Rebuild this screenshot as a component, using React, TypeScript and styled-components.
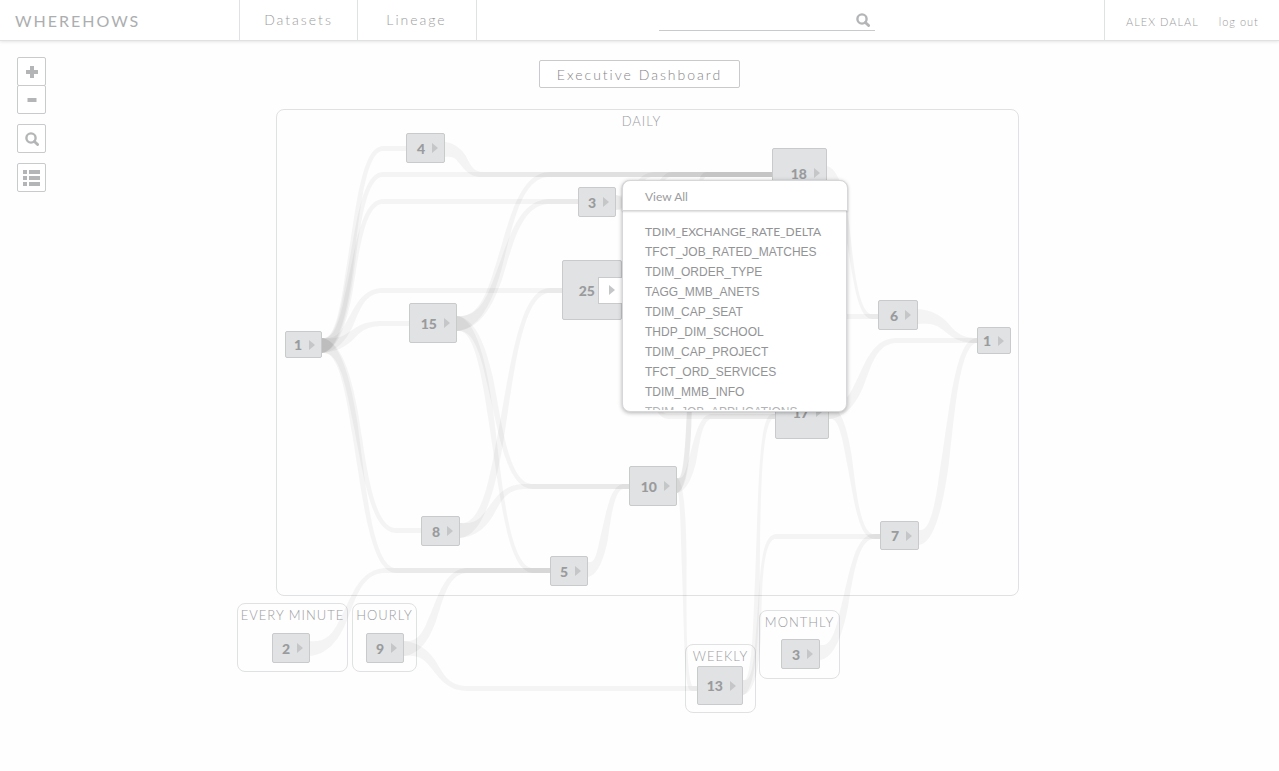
import React from "react";
import styled, { createGlobalStyle, css } from "styled-components";

const GlobalStyle = createGlobalStyle`
  *, *::before, *::after { box-sizing: border-box; }
  body { margin: 0; background: #fefefe; color: #9b9c9e; font-family: Lato, "Open Sans", sans-serif; }
  button, input { font: inherit; color: inherit; letter-spacing: inherit; }
  a { color: inherit; text-decoration: none; }
`;

const LINE = "#e0e1e2";
const EDGE = "#c9cacc";

const Header = styled.header`
  display: flex;
  height: 41px;
  background: #fff;
  border-bottom: 1px solid ${LINE};
  box-shadow: 0 1px 3px rgba(0, 0, 0, 0.1);
`;

const Brand = styled.a`
  flex: 0 0 239px;
  padding-left: 15px;
  line-height: 42px;
  font-size: 16px;
  letter-spacing: 2px;
  color: #acaeb0;
`;

const Nav = styled.nav`
  display: flex;
  padding-right: 1px;
  border-right: 1px solid ${LINE};
`;

const NavLink = styled.a`
  width: 118px;
  border-left: 1px solid ${LINE};
  text-align: center;
  line-height: 40px;
  font-size: 14px;
  font-weight: 300;
  letter-spacing: 2px;
`;

const SearchArea = styled.form`
  flex: 1;
  display: flex;
  justify-content: center;
  align-items: flex-start;
  padding: 10px 48px 0 0;
`;

const SearchBox = styled.label`
  display: flex;
  align-items: center;
  width: 216px;
  height: 21px;
  padding-right: 5px;
  border-bottom: 1px solid ${EDGE};
  color: #b4b5b7;
`;

const SearchInput = styled.input`
  flex: 1;
  min-width: 0;
  border: 0;
  padding: 0;
  background: none;
  outline: none;
  font-size: 14px;
`;

const Account = styled.div`
  flex: 0 0 175px;
  display: flex;
  gap: 20px;
  padding-left: 21px;
  border-left: 1px solid ${LINE};
  line-height: 43px;
  font-size: 11px;
  font-weight: 300;
  letter-spacing: 1px;
  white-space: nowrap;
`;

const Main = styled.main`
  position: relative;
  padding: 19px 0 56px;
`;

const Toolbar = styled.div`
  position: absolute;
  left: 17px;
  top: 16px;
  display: flex;
  flex-direction: column;
  gap: 10px;
`;

const ToolGroup = styled.div`
  display: flex;
  flex-direction: column;
`;

const ToolButton = styled.button`
  display: flex;
  align-items: center;
  justify-content: center;
  width: 29px;
  height: 29px;
  padding: 0;
  background: #fff;
  border: 1px solid ${EDGE};
  border-radius: 2px;
  color: #b4b5b7;
  ${ToolGroup} & + & { margin-top: -1px; }
`;

const Title = styled.button`
  display: block;
  width: 201px;
  height: 28px;
  margin: 0 auto 21px;
  padding: 0;
  background: #fff;
  border: 1px solid ${EDGE};
  border-radius: 2px;
  font-size: 14px;
  font-weight: 300;
  letter-spacing: 2px;
  color: #848587;
  white-space: nowrap;
`;

const ORIGIN_X = 237;
const ORIGIN_Y = 109;

const Graph = styled.section`
  position: relative;
  width: 805px;
  height: 605px;
  margin: 0 auto;
`;

type Box = { $x: number; $y: number; $w: number; $h: number };

const placed = css<Box>`
  position: absolute;
  left: ${(p) => p.$x - ORIGIN_X}px;
  top: ${(p) => p.$y - ORIGIN_Y}px;
  width: ${(p) => p.$w}px;
  height: ${(p) => p.$h}px;
`;

const Group = styled.div<Box>`
  ${placed}
  border: 1px solid ${LINE};
  border-radius: 8px;
  padding: 2px ${(p) => (p.$w > 200 ? 12 : 0)}px 0 0;
  text-align: center;
  font-size: 13px;
  line-height: 18px;
  font-weight: 300;
  letter-spacing: 1px;
  white-space: nowrap;
`;

const Links = styled.svg`
  position: absolute;
  left: 0;
  top: 0;
  width: 805px;
  height: 605px;
  pointer-events: none;
`;

const Node = styled.button<Box>`
  ${placed}
  display: flex;
  align-items: center;
  justify-content: flex-end;
  gap: 7px;
  padding: 0 6px 0 0;
  background: #e0e2e4;
  border: 1px solid ${EDGE};
  border-radius: 2px;
  font-size: 14px;
  font-weight: 900;
  color: #9a9b9d;
`;

const Arrow = styled.span`
  border-left: 6px solid #c4c6c8;
  border-top: 5px solid transparent;
  border-bottom: 5px solid transparent;
`;

const OpenTab = styled.span`
  display: flex;
  align-items: center;
  width: 24px;
  height: 27px;
  margin: 0 -7px 0 -4px;
  padding-left: 10px;
  background: #fff;
  border: 1px solid ${EDGE};
  border-right: 0;
`;

const Menu = styled.div<Box>`
  ${placed}
  display: flex;
  flex-direction: column;
  background: #fff;
  border: 1px solid #d6d7d8;
  border-radius: 8px;
  box-shadow: 0 1px 4px rgba(0, 0, 0, 0.3);
  font-size: 12px;
`;

const ViewAll = styled.a`
  flex: none;
  height: 31px;
  margin: -1px -2px 0 -1px;
  padding-left: 22px;
  line-height: 32px;
  background: #fff;
  border: 1px solid #d6d7d8;
  border-radius: 8px 8px 0 0;
  box-shadow: 0 1px 2px rgba(0, 0, 0, 0.14);
`;

const MenuList = styled.ul`
  flex: 1;
  min-height: 0;
  margin: 11px 0 1px;
  padding: 0 0 0 22px;
  list-style: none;
  overflow: hidden;
  line-height: 20px;
  font-family: "Liberation Sans", Arial, sans-serif;
  white-space: nowrap;
  color: #929395;
  li:first-child { font-family: Lato, sans-serif; }
  li:last-child { opacity: 0.7; }
`;

const SearchIcon = () => (
  <svg width="14" height="14" viewBox="0 0 14 14" fill="none" stroke="currentColor" aria-hidden="true">
    <circle cx="6" cy="6" r="4.6" strokeWidth="2.4" />
    <path d="M9.4 9.4 L12.6 12.6" strokeWidth="2.8" strokeLinecap="round" />
  </svg>
);

const groups: [string, number, number, number, number][] = [
  ["DAILY", 276, 109, 743, 487],
  ["EVERY MINUTE", 237, 603, 111, 69],
  ["HOURLY", 352, 603, 65, 69],
  ["WEEKLY", 685, 644, 71, 69],
  ["MONTHLY", 759, 610, 81, 69],
];

const nodes: [number, number, number, number, number][] = [
  [1, 285, 331, 37, 27],
  [4, 406, 133, 39, 30],
  [3, 578, 187, 38, 30],
  [25, 562, 260, 60, 60],
  [15, 409, 303, 48, 40],
  [18, 772, 148, 55, 50],
  [6, 878, 300, 40, 30],
  [1, 977, 327, 34, 27],
  [17, 775, 385, 54, 54],
  [10, 629, 466, 48, 40],
  [7, 880, 521, 39, 29],
  [8, 421, 516, 39, 30],
  [5, 550, 556, 38, 30],
  [2, 272, 633, 38, 30],
  [9, 366, 633, 38, 30],
  [13, 697, 666, 46, 39],
  [3, 781, 639, 39, 30],
];

// from x, from y, bend end x, target y, target x, width at the middle of the bend
const links: [number, number, number, number, number, number][] = [
  [322, 345, 383, 148, 406, 6],
  [322, 345, 383, 174, 772, 6],
  [322, 345, 383, 201, 578, 6],
  [322, 345, 383, 290, 562, 7],
  [322, 345, 383, 323, 409, 8],
  [322, 345, 396, 530, 421, 6],
  [322, 345, 396, 570, 550, 6],
  [445, 149, 483, 174, 772, 9],
  [457, 323, 550, 174, 772, 6],
  [457, 323, 550, 201, 578, 7],
  [457, 323, 533, 486, 629, 6],
  [457, 323, 533, 570, 550, 5],
  [460, 530, 550, 290, 562, 6],
  [460, 530, 525, 486, 629, 8],
  [588, 569, 624, 486, 629, 7],
  [310, 648, 386, 570, 550, 6],
  [404, 648, 468, 570, 550, 7],
  [404, 648, 468, 688, 697, 7],
  [616, 202, 655, 174, 772, 6],
  [616, 202, 665, 316, 878, 5],
  [622, 290, 672, 174, 772, 5],
  [622, 290, 668, 416, 775, 6],
  [677, 485, 706, 174, 772, 4],
  [677, 485, 702, 316, 772, 4],
  [677, 485, 712, 416, 775, 7],
  [677, 485, 692, 688, 697, 4],
  [743, 687, 773, 416, 775, 4],
  [743, 687, 776, 536, 880, 4],
  [820, 652, 874, 536, 880, 6],
  [829, 411, 897, 340, 977, 8],
  [829, 411, 874, 536, 880, 5],
  [827, 173, 872, 316, 878, 4],
  [918, 316, 977, 340, 977, 8],
  [919, 537, 977, 340, 977, 7],
];

// A band that leaves its source wide, narrows along an S-bend and runs flat into its target.
function ribbon([x1, y1, x2, y2, end, mid]: (typeof links)[number]) {
  const steps = 60;
  const pull = Math.abs(y2 - y1) / (x2 - x1) > 4.5 ? 0.8 : 0.57;
  const c1 = x1 + (x2 - x1) * pull;
  const c2 = x2 - (x2 - x1) * pull;
  const inner = 2 * mid - 10;
  const above: string[] = [];
  const below: string[] = [];
  for (let i = 0; i <= steps; i++) {
    const t = i / steps;
    const u = 1 - t;
    const x = u * u * u * x1 + 3 * u * u * t * c1 + 3 * u * t * t * c2 + t * t * t * x2;
    const y = u * u * (u + 3 * t) * y1 + t * t * (t + 3 * u) * y2;
    const dx = 3 * u * u * (c1 - x1) + 6 * u * t * (c2 - c1) + 3 * t * t * (x2 - c2);
    const dy = 6 * u * t * (y2 - y1);
    const len = Math.hypot(dx, dy) || 1;
    const half = (15 * u * u + 2 * u * t * inner + 5 * t * t) / 2;
    const turn = Math.min(1, t * 2.5);
    const nx = (-dy / len) * half * turn;
    const ny = ((dx / len) * turn + 1 - turn) * half;
    above.push(`${(x - nx).toFixed(1)} ${(y - ny).toFixed(1)}`);
    below.unshift(`${(x + nx).toFixed(1)} ${(y + ny).toFixed(1)}`);
  }
  return `M${above.join("L")}L${end} ${y2 - 2.5}L${end} ${y2 + 2.5}L${below.join("L")}Z`;
}

const tables = [
  "TDIM_EXCHANGE_RATE_DELTA",
  "TFCT_JOB_RATED_MATCHES",
  "TDIM_ORDER_TYPE",
  "TAGG_MMB_ANETS",
  "TDIM_CAP_SEAT",
  "THDP_DIM_SCHOOL",
  "TDIM_CAP_PROJECT",
  "TFCT_ORD_SERVICES",
  "TDIM_MMB_INFO",
  "TDIM_JOB_APPLICATIONS",
];

export default function App() {
  return (
    <>
      <GlobalStyle />
      <Header>
        <Brand href="#">WHEREHOWS</Brand>
        <Nav>
          <NavLink href="#datasets">Datasets</NavLink>
          <NavLink href="#lineage">Lineage</NavLink>
        </Nav>
        <SearchArea role="search">
          <SearchBox>
            <SearchInput type="text" aria-label="Search" />
            <SearchIcon />
          </SearchBox>
        </SearchArea>
        <Account>
          <a href="#account">ALEX DALAL</a>
          <a href="#logout">log out</a>
        </Account>
      </Header>
      <Main>
        <Title type="button">Executive Dashboard</Title>
        <Graph aria-label="Lineage graph">
          {groups.map(([name, x, y, w, h]) => (
            <Group key={name} $x={x} $y={y} $w={w} $h={h}>{name}</Group>
          ))}
          <Links viewBox={`${ORIGIN_X} ${ORIGIN_Y} 805 605`} aria-hidden="true">
            {links.map((link, i) => (
              <path key={i} d={ribbon(link)} transform="translate(0 0.5)" fill="#000" fillOpacity="0.04" />
            ))}
          </Links>
          {nodes.map(([count, x, y, w, h]) => (
            <Node key={`${x}-${y}`} type="button" $x={x} $y={y} $w={w} $h={h}>
              {count}
              {count === 25 ? <OpenTab><Arrow /></OpenTab> : <Arrow />}
            </Node>
          ))}
          <Menu $x={622} $y={180} $w={225} $h={232}>
            <ViewAll href="#all">View All</ViewAll>
            <MenuList>
              {tables.map((name) => (
                <li key={name}><a href={`#${name}`}>{name}</a></li>
              ))}
            </MenuList>
          </Menu>
        </Graph>
        <Toolbar role="toolbar" aria-label="View">
          <ToolGroup>
            <ToolButton type="button" aria-label="Zoom in">
              <svg width="12" height="12" viewBox="0 0 12 12" fill="currentColor"><path d="M4 0h4v4h4v4H8v4H4V8H0V4h4z" /></svg>
            </ToolButton>
            <ToolButton type="button" aria-label="Zoom out">
              <svg width="10" height="4" viewBox="0 0 10 4" fill="currentColor"><path d="M0.5 0h9v4h-9z" /></svg>
            </ToolButton>
          </ToolGroup>
          <ToolButton type="button" aria-label="Find"><SearchIcon /></ToolButton>
          <ToolButton type="button" aria-label="List">
            <svg width="17" height="16" viewBox="0 0 17 16" fill="currentColor">
              <path d="M0 0h4v4H0zM6 0h11v4H6zM0 6h4v4H0zM6 6h11v4H6zM0 12h4v4H0zM6 12h11v4H6z" />
            </svg>
          </ToolButton>
        </Toolbar>
      </Main>
    </>
  );
}
